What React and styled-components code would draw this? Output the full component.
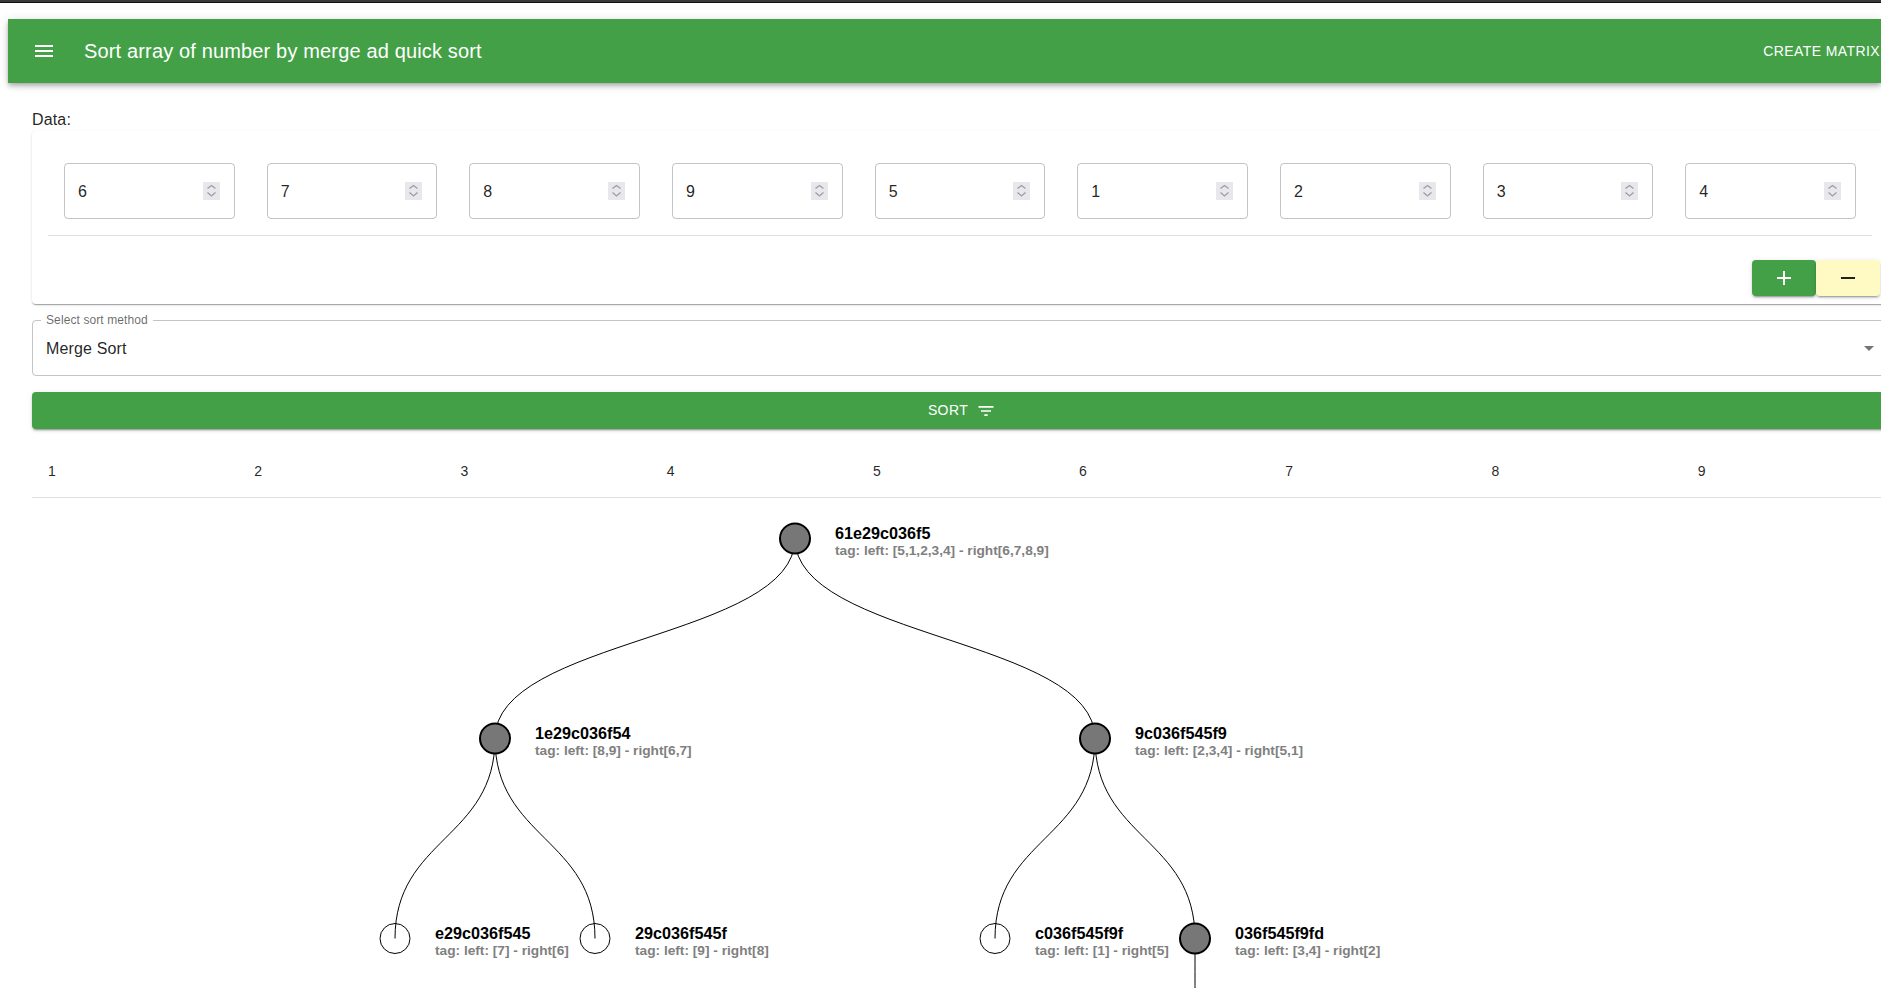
import React from 'react';
import styled, { createGlobalStyle } from 'styled-components';

const GlobalStyle = createGlobalStyle`
  html, body {
    margin: 0;
    height: 988px;
    overflow: hidden;
    background: #fff;
    font-family: "Liberation Sans", Arial, sans-serif;
    color: rgba(0, 0, 0, 0.87);
  }
`;

const TopStrip = styled.div`
  height: 2px;
  background: #3a3a3a;
  border-bottom: 1px solid #111;
`;

const AppBarClip = styled.div`
  overflow: hidden;
  padding: 16px 0 12px 8px;
  margin-bottom: -12px;
`;

const AppBar = styled.header`
  display: flex;
  align-items: center;
  justify-content: space-between;
  box-sizing: border-box;
  width: 1873px;
  height: 64px;
  padding: 0 1px 0 24px;
  background: #43a047;
  color: #fff;
  box-shadow: 0 2px 4px -1px rgba(0, 0, 0, 0.2), 0 4px 5px 0 rgba(0, 0, 0, 0.14), 0 1px 10px 0 rgba(0, 0, 0, 0.12);
`;

const AppBarLeft = styled.div`
  display: flex;
  align-items: center;
  gap: 28px;
`;

const Title = styled.h1`
  margin: 0;
  font-size: 20px;
  font-weight: 400;
  line-height: 1.6;
  letter-spacing: 0.15px;
`;

const TextButton = styled.button`
  padding: 6px 0;
  border: 0;
  background: none;
  color: inherit;
  font: 400 14px/1.75 "Liberation Sans", Arial, sans-serif;
  letter-spacing: 0.4px;
  text-transform: uppercase;
`;

const Icon = styled.svg`
  display: block;
  width: ${(p) => p.$size || 24}px;
  height: ${(p) => p.$size || 24}px;
  fill: currentColor;
  flex: none;
`;

const Main = styled.main`
  width: 1881px;
  overflow: hidden;
  padding-left: 32px;
  box-sizing: border-box;
`;

const Sheet = styled.div`
  width: 1856px;
`;

const DataLabel = styled.div`
  margin-top: 25px;
  font-size: 16px;
  line-height: 23px;
  letter-spacing: 0.15px;
`;

const Card = styled.section`
  border-radius: 4px;
  background: #fff;
  box-shadow: 0 2px 1px -1px rgba(0, 0, 0, 0.2), 0 1px 1px 0 rgba(0, 0, 0, 0.14), 0 1px 3px 0 rgba(0, 0, 0, 0.12);
`;

const CardContent = styled.div`
  padding: 16px;
`;

const InputGrid = styled.div`
  display: grid;
  grid-template-columns: repeat(9, minmax(0, 1fr));
  border-bottom: 1px solid #e0e0e0;
`;

const InputCell = styled.div`
  padding: 16px;
`;

const InputBox = styled.div`
  display: flex;
  align-items: center;
  box-sizing: border-box;
  height: 56px;
  border: 1px solid rgba(0, 0, 0, 0.23);
  border-radius: 4px;
`;

const NumberInput = styled.input`
  flex: 1;
  min-width: 0;
  padding: 1px 0 0 13px;
  border: 0;
  outline: 0;
  background: transparent;
  color: rgba(0, 0, 0, 0.87);
  font: 400 16px "Liberation Sans", Arial, sans-serif;
  letter-spacing: 0.15px;
  appearance: textfield;

  &::-webkit-inner-spin-button,
  &::-webkit-outer-spin-button {
    appearance: none;
    margin: 0;
  }
`;

const Spinner = styled.svg`
  display: block;
  flex: none;
  width: 17px;
  height: 18px;
  margin-right: 14px;
  background: #e8e8ec;
  fill: none;
  stroke: #9c9ca6;
  stroke-width: 1.3px;
`;

const CardActions = styled.div`
  display: flex;
  justify-content: flex-end;
  padding: 8px;
`;

const StepButton = styled.button`
  display: flex;
  align-items: center;
  justify-content: center;
  box-sizing: border-box;
  width: 64px;
  height: 36px;
  padding: 0;
  border: 0;
  border-radius: 4px;
  background: ${(p) => (p.$add ? '#43a047' : '#fff9c4')};
  color: ${(p) => (p.$add ? '#fff' : 'rgba(0, 0, 0, 0.87)')};
  box-shadow: 0 3px 1px -2px rgba(0, 0, 0, 0.2), 0 2px 2px 0 rgba(0, 0, 0, 0.14), 0 1px 5px 0 rgba(0, 0, 0, 0.12);
`;

const SelectField = styled.fieldset`
  display: flex;
  align-items: flex-start;
  justify-content: space-between;
  box-sizing: border-box;
  height: 62px;
  margin: 10px 0 0;
  padding: 0 6px 0 13px;
  border: 1px solid rgba(0, 0, 0, 0.23);
  border-radius: 4px;
`;

const SelectLegend = styled.legend`
  margin-left: -5px;
  padding: 0 5px;
  color: rgba(0, 0, 0, 0.6);
  font-size: 12px;
  line-height: 13px;
  letter-spacing: 0.1px;
`;

const SelectValue = styled.div`
  padding-top: 10px;
  font-size: 16px;
  line-height: 24px;
  letter-spacing: 0.15px;
`;

const Caret = styled(Icon)`
  margin-top: 9px;
  color: rgba(0, 0, 0, 0.54);
`;

const SortButton = styled.button`
  display: flex;
  align-items: center;
  justify-content: center;
  gap: 8px;
  box-sizing: border-box;
  width: 100%;
  height: 37px;
  margin-top: 16px;
  padding: 0 0 0 4px;
  border: 0;
  border-radius: 4px;
  background: #43a047;
  color: #fff;
  font: 400 14px/1.75 "Liberation Sans", Arial, sans-serif;
  letter-spacing: 0.4px;
  box-shadow: 0 3px 1px -2px rgba(0, 0, 0, 0.2), 0 2px 2px 0 rgba(0, 0, 0, 0.14), 0 1px 5px 0 rgba(0, 0, 0, 0.12);
`;

const ResultTable = styled.table`
  width: 100%;
  margin-top: 16px;
  border-collapse: collapse;
  table-layout: fixed;
`;

const ResultCell = styled.td`
  padding: 16px;
  border-bottom: 1px solid #e0e0e0;
  font-size: 14px;
  line-height: 20px;
`;

const TreeSvg = styled.svg`
  display: block;
  overflow: hidden;
`;

const NodeCircle = styled.circle`
  fill: ${(p) => (p.$open ? '#777' : 'transparent')};
  stroke: #000;
  stroke-width: ${(p) => (p.$open ? 2 : 1)}px;
`;

const Link = styled.path`
  fill: none;
  stroke: #000;
  stroke-width: 1px;
`;

const NodeTitle = styled.text`
  font: 700 16.2px "Liberation Sans", Arial, sans-serif;
  fill: #000;
`;

const NodeTag = styled.text`
  font: 700 13.7px "Liberation Sans", Arial, sans-serif;
  fill: #808080;
`;

const values = [6, 7, 8, 9, 5, 1, 2, 3, 4];
const sorted = [1, 2, 3, 4, 5, 6, 7, 8, 9];

// tree is measured from the top of the svg, which starts under the table
const TOP = 40.5;
const STEP = 200;
const LEFT = -32;

const nodes = [
  { id: 'root', x: 795, level: 0, name: '61e29c036f5', tag: 'tag: left: [5,1,2,3,4] - right[6,7,8,9]', open: true },
  { id: 'a', parent: 'root', x: 495, level: 1, name: '1e29c036f54', tag: 'tag: left: [8,9] - right[6,7]', open: true },
  { id: 'b', parent: 'root', x: 1095, level: 1, name: '9c036f545f9', tag: 'tag: left: [2,3,4] - right[5,1]', open: true },
  { id: 'c', parent: 'a', x: 395, level: 2, name: 'e29c036f545', tag: 'tag: left: [7] - right[6]' },
  { id: 'd', parent: 'a', x: 595, level: 2, name: '29c036f545f', tag: 'tag: left: [9] - right[8]' },
  { id: 'e', parent: 'b', x: 995, level: 2, name: 'c036f545f9f', tag: 'tag: left: [1] - right[5]' },
  { id: 'f', parent: 'b', x: 1195, level: 2, name: '036f545f9fd', tag: 'tag: left: [3,4] - right[2]', open: true },
  { id: 'g', parent: 'f', x: 1195, level: 3 },
];

const levelY = (level) => TOP + level * STEP;

const linkPath = (from, to) => {
  const y1 = levelY(from.level);
  const y2 = levelY(to.level);
  const mid = (y1 + y2) / 2;
  return `M${from.x},${y1} C${from.x},${mid} ${to.x},${mid} ${to.x},${y2}`;
};

const App = () => (
  <>
    <GlobalStyle />
    <TopStrip />
    <AppBarClip>
      <AppBar>
        <AppBarLeft>
          <Icon viewBox="0 0 24 24"><path d="M3 18h18v-2H3v2zm0-5h18v-2H3v2zm0-7v2h18V6H3z" /></Icon>
          <Title>Sort array of number by merge ad quick sort</Title>
        </AppBarLeft>
        <TextButton>Create Matrix</TextButton>
      </AppBar>
    </AppBarClip>
    <Main>
      <Sheet>
        <DataLabel>Data:</DataLabel>
        <Card>
          <CardContent>
            <InputGrid>
              {values.map((v, i) => (
                <InputCell key={i}>
                  <InputBox>
                    <NumberInput type="number" defaultValue={v} />
                    <Spinner viewBox="0 0 17 18">
                      <path d="M4.5 6.5l4-3 4 3" />
                      <path d="M4.5 10.5l4 3.5 4-3.5" />
                    </Spinner>
                  </InputBox>
                </InputCell>
              ))}
            </InputGrid>
          </CardContent>
          <CardActions>
            <StepButton $add><Icon viewBox="0 0 24 24"><path d="M19 13h-6v6h-2v-6H5v-2h6V5h2v6h6v2z" /></Icon></StepButton>
            <StepButton><Icon viewBox="0 0 24 24"><path d="M19 13H5v-2h14v2z" /></Icon></StepButton>
          </CardActions>
        </Card>
        <SelectField>
          <SelectLegend>Select sort method</SelectLegend>
          <SelectValue>Merge Sort</SelectValue>
          <Caret viewBox="0 0 24 24"><path d="M7 10l5 5 5-5z" /></Caret>
        </SelectField>
        <SortButton>
          SORT
          <Icon $size={20} viewBox="0 0 24 24"><path d="M10 18h4v-2h-4v2zM3 6v2h18V6H3zm3 7h12v-2H6v2z" /></Icon>
        </SortButton>
        <ResultTable>
          <tbody>
            <tr>
              {sorted.map((n) => <ResultCell key={n}>{n}</ResultCell>)}
            </tr>
          </tbody>
        </ResultTable>
        <TreeSvg width="1856" height="490" viewBox={`${-LEFT} 0 1856 490`}>
          {nodes.filter((n) => n.parent).map((n) => (
            <Link key={n.id} d={linkPath(nodes.find((p) => p.id === n.parent), n)} />
          ))}
          {nodes.filter((n) => n.name).map((n) => (
            <g key={n.id} transform={`translate(${n.x},${levelY(n.level)})`}>
              <NodeCircle r="15" $open={n.open} />
              <NodeTitle x="40">{n.name}</NodeTitle>
              <NodeTag x="40" y="16">{n.tag}</NodeTag>
            </g>
          ))}
        </TreeSvg>
      </Sheet>
    </Main>
  </>
);

export default App;
